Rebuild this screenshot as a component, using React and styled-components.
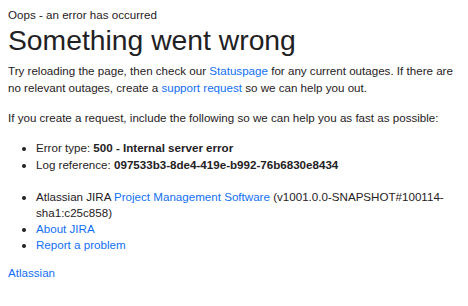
import React from 'react';
import styled, { createGlobalStyle } from 'styled-components';

const GlobalStyle = createGlobalStyle`
    body {
        margin: 0;
        background: #fff;
        font-family: "Liberation Sans", Arial, sans-serif;
        color: #1f2124;
    }
`

const Page = styled.div`
    padding: 6px 8px;
    font-size: 11.6px;
    line-height: 17px;
`

const Subtitle = styled.div`
    margin: 0;
`

const Title = styled.h1`
    margin: 1px 0 6px;
    font-size: 28.3px;
    line-height: 32px;
    font-weight: 400;
`

const Para = styled.p`
    margin: 0 0 13px;
`

const Link = styled.a`
    color: #1170f5;
    text-decoration: none;
`

const List = styled.ul`
    margin: 0 0 ${props => props.gap}px;
    padding-left: 28px;
`

const Item = styled.li`
    line-height: ${props => props.tight ? 16 : 17}px;
`

const App = () => {
    return (
        <>
            <GlobalStyle />
            <Page>
                <Subtitle>Oops - an error has occurred</Subtitle>
                <Title>Something went wrong</Title>
                <Para>
                    Try reloading the page, then check our <Link href="#">Statuspage</Link> for any current outages. If there are no relevant outages, create a <Link href="#">support request</Link> so we can help you out.
                </Para>
                <Para>If you create a request, include the following so we can help you as fast as possible:</Para>
                <List gap={16}>
                    <Item>Error type: <b>500 - Internal server error</b></Item>
                    <Item>Log reference: <b>097533b3-8de4-419e-b992-76b6830e8434</b></Item>
                </List>
                <List gap={11}>
                    <Item tight>Atlassian JIRA <Link href="#">Project Management Software</Link> (v1001.0.0-SNAPSHOT#100114-sha1:c25c858)</Item>
                    <Item tight><Link href="#">About JIRA</Link></Item>
                    <Item tight><Link href="#">Report a problem</Link></Item>
                </List>
                <Link href="#">Atlassian</Link>
            </Page>
        </>
    )
}

export default App
